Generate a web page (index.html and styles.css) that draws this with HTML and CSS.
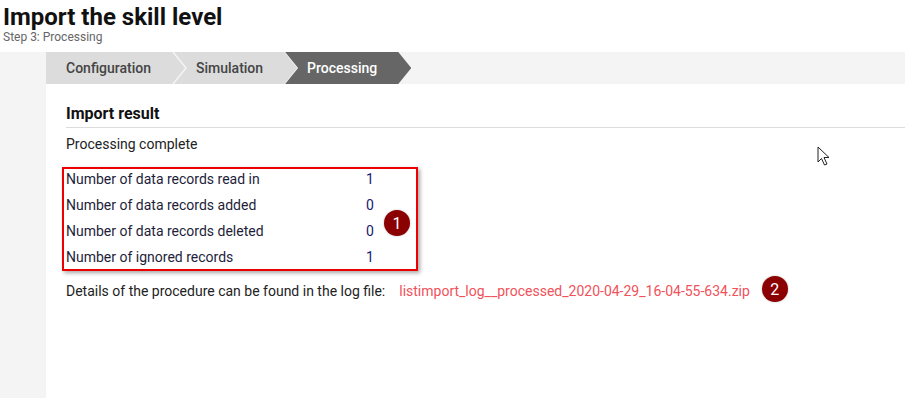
FILE: index.html
```html
<!DOCTYPE html>
<html>
<head>
<meta charset="utf-8">
<link rel="stylesheet" href="styles.css">
</head>
<body>
<header class="page-head">
  <h1 class="title">Import the skill level</h1>
  <div class="subtitle">Step 3: Processing</div>
</header>
<div class="layout">
  <nav class="steps">
    <div class="step step-first">Configuration</div>
    <div class="step">Simulation</div>
    <div class="step step-active">Processing</div>
  </nav>
  <div class="body">
    <aside class="sidebar"></aside>
    <main class="content">
      <h2 class="section-title">Import result</h2>
      <p class="status">Processing complete</p>
      <div class="stats">
        <div class="rows">
          <div class="row"><span class="label">Number of data records read in</span><span class="value">1</span></div>
          <div class="row"><span class="label">Number of data records added</span><span class="value">0</span></div>
          <div class="row"><span class="label">Number of data records deleted</span><span class="value">0</span></div>
          <div class="row"><span class="label">Number of ignored records</span><span class="value">1</span></div>
        </div>
        <span class="badge badge-one">1</span>
      </div>
      <div class="details">
        <span class="details-text">Details of the procedure can be found in the log file:</span>
        <a class="log-link" href="#">listimport_log__processed_2020-04-29_16-04-55-634.zip</a>
        <span class="badge badge-two">2</span>
      </div>
      <svg class="cursor" width="14" height="22" viewBox="0 0 14 22">
        <path d="M1 1 L1 16 L4.5 12.5 L7.5 19 L10 18 L7 11.5 L12 11.5 Z" fill="#fff" stroke="#222" stroke-width="1" stroke-linejoin="miter"/>
      </svg>
    </main>
  </div>
</div>
</body>
</html>
```
FILE: styles.css
```css
* { box-sizing: border-box; }
html, body { margin: 0; padding: 0; }
body {
  font-family: Roboto, "Liberation Sans", Arial, sans-serif;
  color: #222;
  background: #fff;
  width: 905px;
  height: 398px;
  overflow: hidden;
}
.page-head {
  padding: 3px 0 0 3px;
  height: 52px;
}
.title {
  margin: 0;
  font-size: 24px;
  line-height: 28px;
  font-weight: 700;
  color: #111;
}
.subtitle {
  font-size: 12px;
  line-height: 14px;
  color: #666;
  margin-top: -1px;
}
.layout {
  display: flex;
  flex-direction: column;
}
.steps {
  display: flex;
  height: 32px;
  background: #f4f4f4;
  padding-left: 46px;
}
.step {
  display: flex;
  align-items: center;
  height: 32px;
  padding: 0 34px 0 22px;
  font-size: 14px;
  font-weight: 500;
  color: #444;
  background: #dcdcdc;
  margin-left: -11px;
  clip-path: polygon(0 0, calc(100% - 13px) 0, 100% 50%, calc(100% - 13px) 100%, 0 100%, 13px 50%);
}
.step-first {
  margin-left: 0;
  padding-left: 20px;
  clip-path: polygon(0 0, calc(100% - 13px) 0, 100% 50%, calc(100% - 13px) 100%, 0 100%);
}
.step-active {
  background: #666;
  color: #fff;
  margin-left: -12px;
}
.body {
  display: flex;
  height: 314px;
}
.sidebar {
  width: 46px;
  background: #f4f4f4;
}
.content {
  flex: 1;
  position: relative;
  padding: 20px 0 0 20px;
}
.section-title {
  margin: 0;
  font-size: 16px;
  line-height: 20px;
  font-weight: 700;
  color: #111;
  padding-bottom: 3px;
  border-bottom: 1px solid #dcdcdc;
}
.status {
  margin: 7px 0 0 0;
  font-size: 14px;
  line-height: 18px;
}
.stats {
  position: relative;
  width: 356px;
  margin: 14px 0 0 -4px;
  border: 2px solid #e00;
  box-shadow: 2px 2px 4px rgba(0, 0, 0, 0.35);
  padding-left: 2px;
}
.rows {
  margin: -3px 0 -1px 0;
}
.row {
  display: flex;
  height: 26px;
  align-items: center;
  font-size: 14px;
}
.label {
  width: 300px;
  color: #1e1e3a;
}
.value {
  color: #1a1a6e;
}
.badge {
  display: inline-flex;
  align-items: center;
  justify-content: center;
  width: 26px;
  height: 26px;
  border-radius: 50%;
  background: #8b0000;
  color: #fff;
  font-size: 16px;
  box-shadow: 0 0 2px rgba(0, 0, 0, 0.3);
}
.badge-one {
  position: absolute;
  left: 320px;
  top: 41px;
}
.details {
  display: flex;
  align-items: center;
  margin-top: 9px;
  font-size: 14px;
}
.details-text {
  color: #222;
}
.log-link {
  color: #f0525a;
  text-decoration: none;
  margin-left: 14px;
}
.badge-two {
  margin-left: 12px;
  margin-top: -4px;
}
.cursor {
  position: absolute;
  left: 771px;
  top: 62px;
}
```
